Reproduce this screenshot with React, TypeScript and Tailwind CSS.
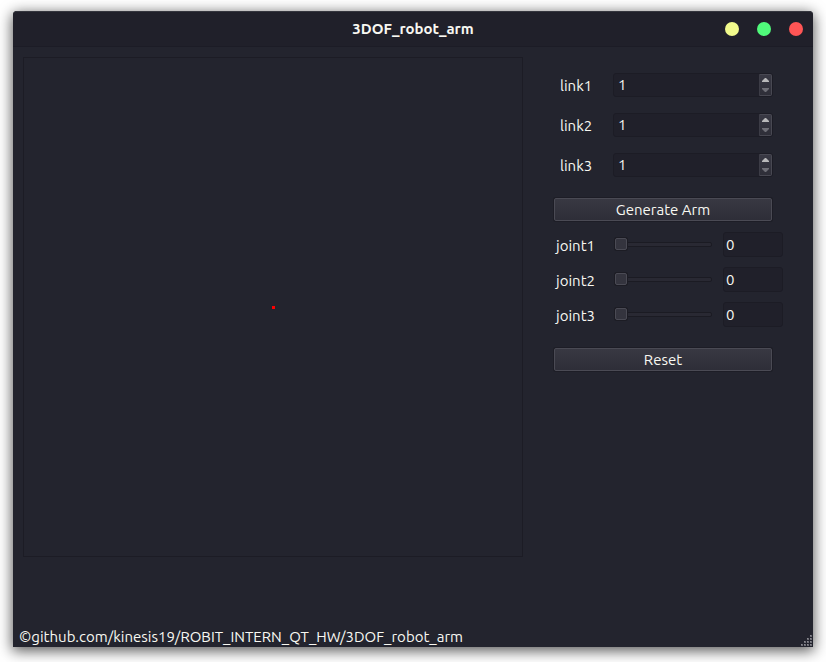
import { useState } from "react";

type FieldProps = {
  label: string;
  value: number;
  onChange: (value: number) => void;
};

const LINKS = ["link1", "link2", "link3"];
const JOINTS = ["joint1", "joint2", "joint3"];
const GRIP = [
  [9, 0],
  [6, 3],
  [9, 3],
  [3, 6],
  [6, 6],
  [9, 6],
  [0, 9],
  [3, 9],
  [6, 9],
  [9, 9],
];

function LinkField({ label, value, onChange }: FieldProps) {
  return (
    <div className="flex h-6 items-center">
      <label htmlFor={label} className="w-[59px] shrink-0 pt-0.5 pl-1.5">
        {label}
      </label>
      <div className="flex h-6 w-40 rounded-[3px] border border-[#1c1c25] bg-[#20202a]">
        <input
          id={label}
          type="number"
          value={value}
          onChange={(e) => onChange(Number(e.target.value))}
          className="min-w-0 flex-1 appearance-none bg-transparent pl-1 outline-none [-moz-appearance:textfield] [&::-webkit-inner-spin-button]:appearance-none"
        />
        <div className="flex w-[13px] flex-col rounded-r-[2px] border border-[#484852] border-l-[#3c3c46] bg-linear-to-b from-[#393944] to-[#2e2e38]">
          <button
            type="button"
            aria-label={`Increase ${label}`}
            onClick={() => onChange(value + 1)}
            className="flex flex-1 items-center justify-center"
          >
            <svg width="7" height="4" viewBox="0 0 7 4">
              <path d="M3 0H4L7 3V4H0V3Z" fill="#b9b9bb" />
            </svg>
          </button>
          <button
            type="button"
            aria-label={`Decrease ${label}`}
            onClick={() => onChange(Math.max(1, value - 1))}
            className="flex flex-1 items-center justify-center"
          >
            <svg width="7" height="4" viewBox="0 0 7 4">
              <path d="M0 0H7V1L4 4H3L0 1Z" fill="#6f6f77" />
            </svg>
          </button>
        </div>
      </div>
    </div>
  );
}

function JointField({ label, value, onChange }: FieldProps) {
  return (
    <div className="flex h-[25px] items-center">
      <label htmlFor={label} className="w-[60px] shrink-0 pt-0.5 pl-0.5">
        {label}
      </label>
      <input
        id={label}
        type="range"
        min={0}
        max={360}
        value={value}
        onChange={(e) => onChange(Number(e.target.value))}
        className="h-3.5 w-[98px] appearance-none bg-transparent outline-none [&::-webkit-slider-runnable-track]:h-[5px] [&::-webkit-slider-runnable-track]:rounded-[2px] [&::-webkit-slider-runnable-track]:border [&::-webkit-slider-runnable-track]:border-[#1b1b23] [&::-webkit-slider-runnable-track]:bg-[#292933] [&::-webkit-slider-thumb]:-mt-[5px] [&::-webkit-slider-thumb]:size-3 [&::-webkit-slider-thumb]:appearance-none [&::-webkit-slider-thumb]:rounded-[2px] [&::-webkit-slider-thumb]:border [&::-webkit-slider-thumb]:border-[#4a4a54] [&::-webkit-slider-thumb]:bg-[#34343e] [&::-webkit-slider-thumb]:shadow-[0_0_0_1px_#1c1c24]"
      />
      <input
        type="text"
        aria-label={`${label} angle`}
        value={value}
        onChange={(e) => onChange(Number(e.target.value) || 0)}
        className="ml-[11px] h-[25px] w-[60px] rounded-[3px] border border-[#1c1c25] bg-[#20202a] pl-0.5 outline-none"
      />
    </div>
  );
}

function PushButton({ children, onClick }: { children: string; onClick?: () => void }) {
  return (
    <button
      type="button"
      onClick={onClick}
      className="flex h-[23px] w-[218px] items-center justify-center rounded-[2px] border border-[#4a4a54] bg-linear-to-b from-[#383842] to-[#2e2e38] shadow-[0_0_0_1px_#1d1d26]"
    >
      {children}
    </button>
  );
}

export default function App() {
  const [links, setLinks] = useState([1, 1, 1]);
  const [joints, setJoints] = useState([0, 0, 0]);

  const replaceAt = (list: number[], index: number, value: number) =>
    list.map((item, i) => (i === index ? value : item));

  return (
    <div className="flex min-h-screen bg-white px-[13px] pt-[11px] pb-[15px] font-['Ubuntu','Noto_Sans',sans-serif] text-[15px] leading-5 text-[#f8f8f2]">
      <div className="flex flex-1 flex-col rounded-t-[4px] bg-[#23242e] shadow-[0_3px_14px_1px_rgba(0,0,0,0.65)]">
        <header className="grid h-9 shrink-0 grid-cols-[1fr_auto_1fr] items-center rounded-t-[4px] border-t border-b border-t-[#35363e] border-b-[#1c1c26] bg-[#20202a] px-2.5">
          <h1 className="col-start-2 font-bold">3DOF_robot_arm</h1>
          <div className="flex justify-end gap-[18px]">
            <button type="button" aria-label="Minimize" className="size-3.5 rounded-full bg-[#f1fa8c]" />
            <button type="button" aria-label="Maximize" className="size-3.5 rounded-full bg-[#50fa7b]" />
            <button type="button" aria-label="Close" className="size-3.5 rounded-full bg-[#ff5555]" />
          </div>
        </header>

        <main className="flex flex-1 items-start pt-2.5 pl-2.5">
          <div className="flex aspect-square w-[500px] shrink-0 items-center justify-center border border-[#1c1c25]">
            <div className="size-[3px] bg-[#ff0000]" />
          </div>

          <form className="ml-[31px] pt-4" onSubmit={(e) => e.preventDefault()}>
            <div className="flex flex-col gap-4">
              {LINKS.map((name, i) => (
                <LinkField
                  key={name}
                  label={name}
                  value={links[i]}
                  onChange={(v) => setLinks(replaceAt(links, i, v))}
                />
              ))}
            </div>
            <div className="pt-[21px] pb-[11px]">
              <PushButton>Generate Arm</PushButton>
            </div>
            <div className="flex flex-col gap-2.5">
              {JOINTS.map((name, i) => (
                <JointField
                  key={name}
                  label={name}
                  value={joints[i]}
                  onChange={(v) => setJoints(replaceAt(joints, i, v))}
                />
              ))}
            </div>
            <div className="pt-[21px]">
              <PushButton onClick={() => setJoints([0, 0, 0])}>Reset</PushButton>
            </div>
          </form>
        </main>

        <footer className="flex items-end justify-between pl-1.5">
          <p>©github.com/kinesis19/ROBIT_INTERN_QT_HW/3DOF_robot_arm</p>
          <svg width="12" height="12" viewBox="0 0 12 12" aria-hidden="true">
            {GRIP.map(([x, y]) => (
              <g key={`${x}-${y}`}>
                <rect x={x} y={y} width="2" height="2" fill="#6c6c74" />
                <rect x={x} y={y} width="1" height="1" fill="#8b8b92" />
              </g>
            ))}
          </svg>
        </footer>
      </div>
    </div>
  );
}
